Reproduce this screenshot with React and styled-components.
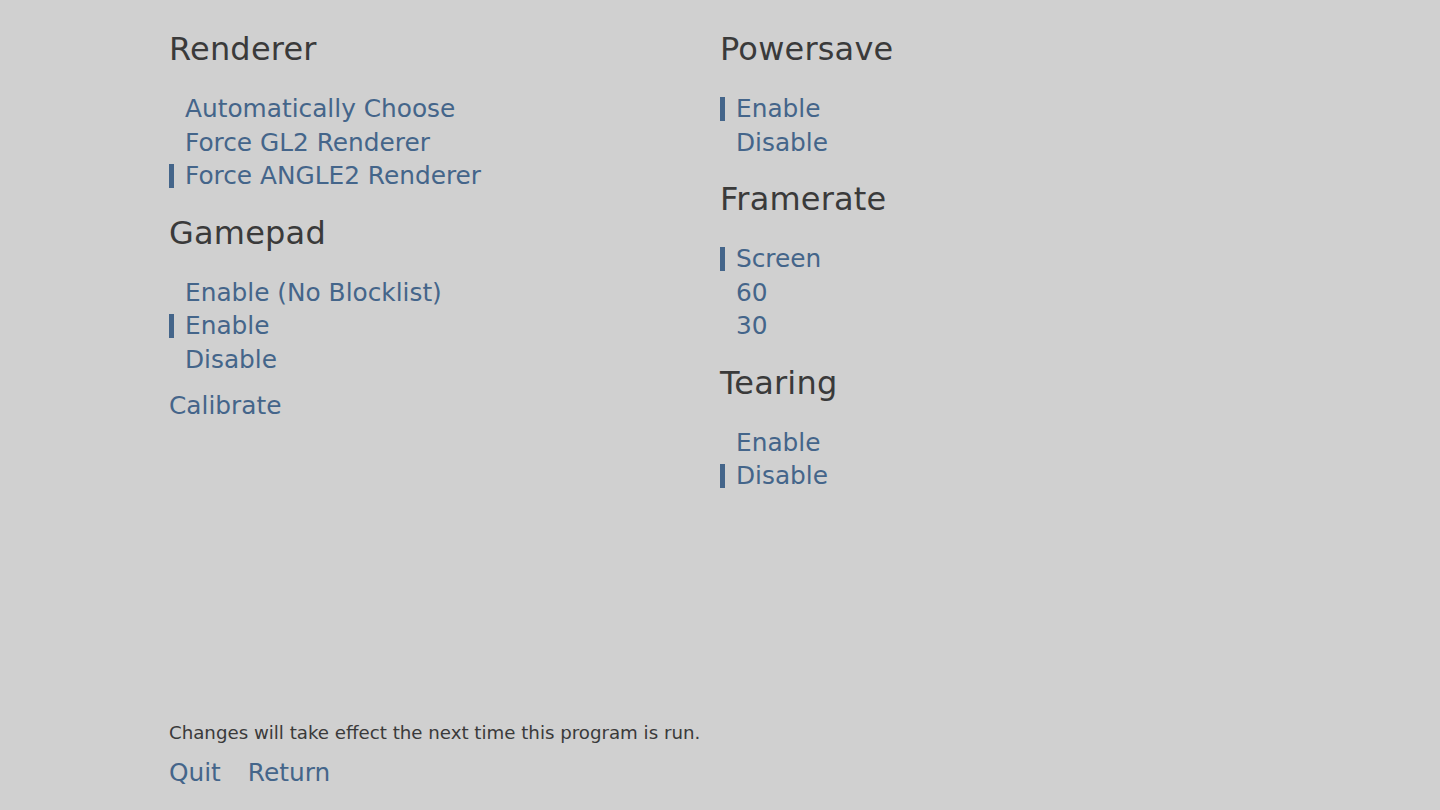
import styled, { createGlobalStyle } from 'styled-components';

const GlobalStyle = createGlobalStyle`
    html, body {
        margin: 0;
        padding: 0;
        background: #d0d0d0;
        font-family: "DejaVu Sans", Verdana, sans-serif;
    }
`

const Page = styled.div`
    box-sizing: border-box;
    height: 100vh;
    padding: 29px 0 21px 169px;
    display: flex;
    flex-direction: column;
`

const Columns = styled.div`
    display: grid;
    grid-template-columns: 551px 1fr;
`

const Column = styled.div`
    display: flex;
    flex-direction: column;
    gap: 20px;
`

const Section = styled.section`
    display: flex;
    flex-direction: column;
    gap: 23px;
`

const Heading = styled.h2`
    margin: 0;
    font-size: 32px;
    font-weight: normal;
    line-height: 40px;
    letter-spacing: 0.2px;
    color: #3a3a3a;
`

const List = styled.div`
    display: flex;
    flex-direction: column;
`

const Option = styled.div`
    position: relative;
    padding-left: 16px;
    font-size: 24.8px;
    line-height: 33.5px;
    color: #44658a;
    cursor: pointer;

    &::before {
        content: '';
        display: ${p => (p.$selected ? 'block' : 'none')};
        position: absolute;
        left: 0;
        top: 5px;
        width: 5px;
        height: 24px;
        background: #44658a;
    }
`

const Action = styled.span`
    display: block;
    margin-top: ${p => p.$pull || 0}px;
    font-size: 24.8px;
    line-height: 33.5px;
    color: #44658a;
    cursor: pointer;
`

const Footer = styled.footer`
    margin-top: auto;
    display: flex;
    flex-direction: column;
    gap: 11px;
`

const Note = styled.div`
    font-size: 18.2px;
    line-height: 24px;
    color: #3a3a3a;
`

const Buttons = styled.div`
    display: flex;
    gap: 27px;
`

const groups = {
    left: [
        { title: 'Renderer', options: ['Automatically Choose', 'Force GL2 Renderer', 'Force ANGLE2 Renderer'], selected: 2 },
        { title: 'Gamepad', options: ['Enable (No Blocklist)', 'Enable', 'Disable'], selected: 1 },
    ],
    right: [
        { title: 'Powersave', options: ['Enable', 'Disable'], selected: 0 },
        { title: 'Framerate', options: ['Screen', '60', '30'], selected: 0 },
        { title: 'Tearing', options: ['Enable', 'Disable'], selected: 1 },
    ],
}

function Group({ title, options, selected }) {
    return (
        <Section>
            <Heading>{title}</Heading>
            <List>
                {options.map((o, i) => (
                    <Option key={o} $selected={i === selected}>{o}</Option>
                ))}
            </List>
        </Section>
    );
}

export default function App() {
    return (
        <>
            <GlobalStyle />
            <Page>
                <Columns>
                    <Column>
                        {groups.left.map(g => <Group key={g.title} {...g} />)}
                        <Action $pull={-7.5}>Calibrate</Action>
                    </Column>
                    <Column>
                        {groups.right.map(g => <Group key={g.title} {...g} />)}
                    </Column>
                </Columns>
                <Footer>
                    <Note>Changes will take effect the next time this program is run.</Note>
                    <Buttons>
                        <Action>Quit</Action>
                        <Action>Return</Action>
                    </Buttons>
                </Footer>
            </Page>
        </>
    );
}
